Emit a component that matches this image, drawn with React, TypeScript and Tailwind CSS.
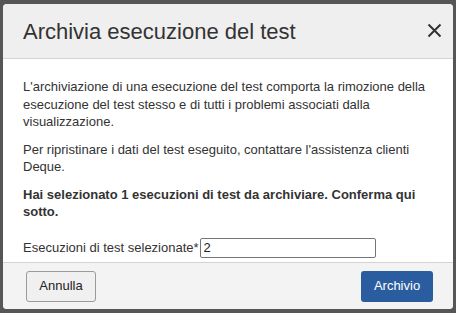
export default function App() {
  return (
    <div className="w-[456px] h-[313px] bg-[#565656] pt-[4px] px-[3px] font-['Liberation_Sans',Arial,sans-serif] text-[#333]">
      <div className="w-[450px] h-[305px] bg-white rounded-[4px] overflow-hidden flex flex-col">
        <div className="h-[55px] shrink-0 bg-[#efefef] border-b border-[#d4d4d4] flex items-center justify-between pl-[20px] pr-[11px]">
          <h1 className="text-[22px] leading-none text-[#333] pt-[1px]">Archivia esecuzione del test</h1>
          <button aria-label="Chiudi" className="w-[15px] h-[15px] mt-[-1px]">
            <svg width="15" height="15" viewBox="0 0 15 15">
              <path d="M1.5 1.5L13.5 13.5M13.5 1.5L1.5 13.5" stroke="#333" strokeWidth="2" />
            </svg>
          </button>
        </div>
        <div className="flex-1 px-[20px] pt-[19px] text-[13px] leading-[17.5px]">
          <p className="mb-[10px]">
            L'archiviazione di una esecuzione del test comporta la rimozione della esecuzione del test stesso e di tutti i
            problemi associati dalla visualizzazione.
          </p>
          <p className="mb-[10px]">
            Per ripristinare i dati del test eseguito, contattare l'assistenza clienti Deque.
          </p>
          <p className="font-bold mb-[17px]">
            Hai selezionato 1 esecuzioni di test da archiviare. Conferma qui sotto.
          </p>
          <label className="flex items-center">
            <span>Esecuzioni di test selezionate*</span>
            <input
              defaultValue="2"
              className="ml-[1px] w-[176px] h-[20px] border border-[#767676] rounded-[2px] px-[3px] text-[13px] text-[#222] outline-none"
            />
          </label>
        </div>
        <div className="h-[47px] shrink-0 bg-[#f3f3f3] border-t border-[#d4d4d4] flex items-center justify-between pl-[23px] pr-[20px]">
          <button className="h-[31px] w-[70px] rounded-[3px] border border-[#9a9a9a] bg-[#f0f0f0] text-[13px] text-[#222]">
            Annulla
          </button>
          <button className="h-[31px] w-[72px] rounded-[3px] bg-[#2a5d9f] text-[13px] text-white">
            Archivio
          </button>
        </div>
      </div>
    </div>
  );
}
